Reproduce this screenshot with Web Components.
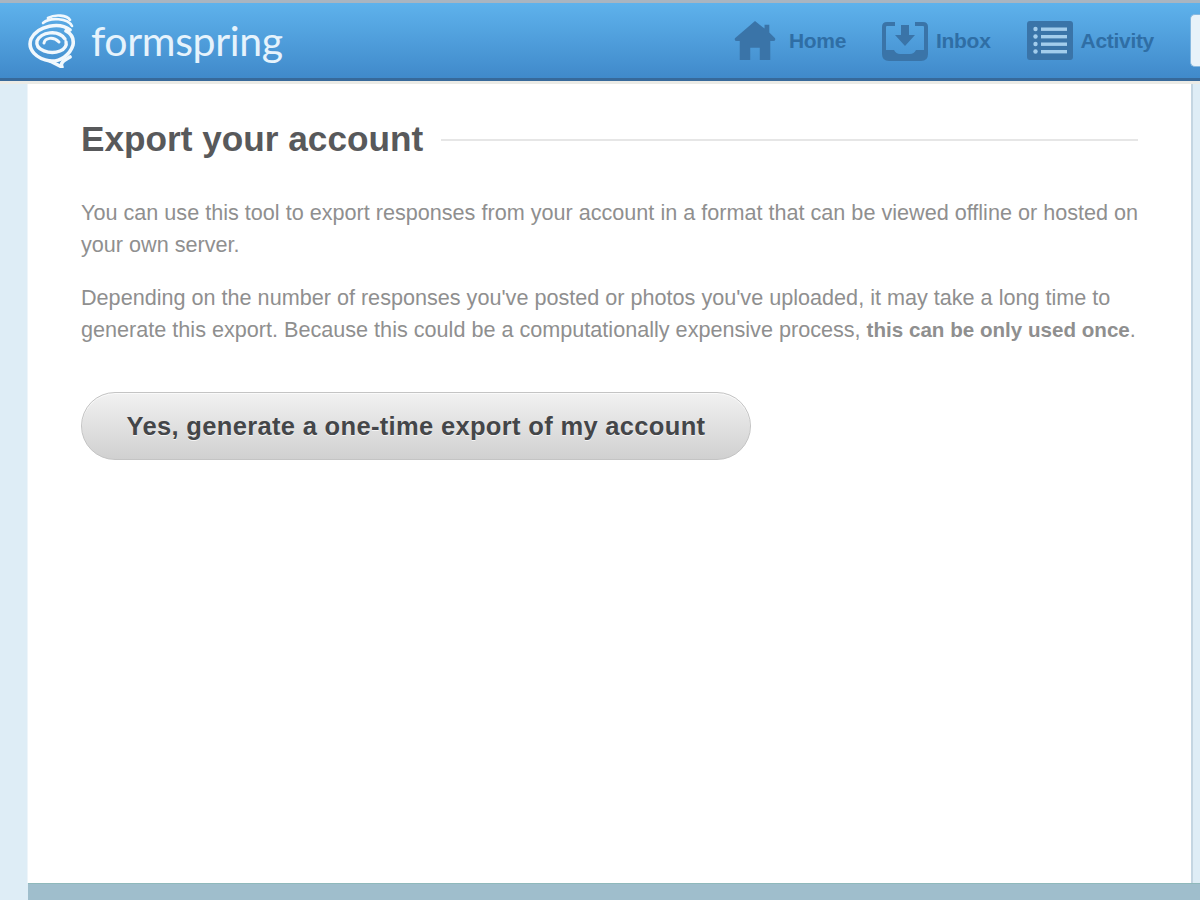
<!doctype html>
<html lang="en">
<head>
<meta charset="utf-8">
<title>Export your account</title>
<style>
  html, body { margin: 0; height: 100%; }
  body {
    width: 1200px;
    height: 900px;
    overflow: hidden;
    display: flex;
    flex-direction: column;
    background: #deedf6;
    font-family: "Liberation Sans", Arial, sans-serif;
  }
  b { font-size: 20.6px; }
</style>
</head>
<body>
<fs-header>
  <fs-nav-item label="Home" icon="home"></fs-nav-item>
  <fs-nav-item label="Inbox" icon="inbox"></fs-nav-item>
  <fs-nav-item label="Activity" icon="activity"></fs-nav-item>
</fs-header>
<fs-page>
  <fs-heading>Export your account</fs-heading>
  <p>You can use this tool to export responses from your account in a format that can be viewed offline or hosted on your own server.</p>
  <p>Depending on the number of responses you've posted or photos you've uploaded, it may take a long time to generate this export. Because this could be a computationally expensive process, <b>this can be only used once</b>.</p>
  <fs-button>Yes, generate a one-time export of my account</fs-button>
</fs-page>
<fs-footer></fs-footer>

<script>
const ICONS = {
  home: `<svg style="margin-right:5px" width="42" height="42" viewBox="0 0 44 44"><path fill="#3a74a8" d="M22 1 L32 9 V5 H37 V13 L43 19 Q44 22 41 22 H38 V42 H27 V29 H17 V42 H6 V22 H3 Q0 22 1 19 Z"/></svg>`,
  inbox: `<svg width="46" height="40" viewBox="0 0 46 40"><path fill="none" stroke="#3a74a8" stroke-width="4" stroke-linejoin="round" d="M13 3 H5 Q2 3 2 6 V33 Q2 38 7 38 H39 Q44 38 44 33 V6 Q44 3 41 3 H33"/><path fill="#3a74a8" d="M3 29 H12 Q14 33 18 33 H28 Q32 33 34 29 H43 V37 H3 Z"/><path fill="#3a74a8" d="M19 4 H27 V14 H33 L23 25 L13 14 H19 Z"/></svg>`,
  activity: `<svg width="46" height="39" viewBox="0 0 46 39"><rect width="46" height="39" rx="3" fill="#3a74a8"/><g fill="#a3cdec"><circle cx="8.5" cy="8" r="2.2"/><circle cx="8.5" cy="15.5" r="2.2"/><circle cx="8.5" cy="23" r="2.2"/><circle cx="8.5" cy="30.5" r="2.2"/><rect x="14" y="6.5" width="26" height="3.4"/><rect x="14" y="14" width="26" height="3.4"/><rect x="14" y="21.5" width="26" height="3.4"/><rect x="14" y="29" width="26" height="3.4"/></g></svg>`,
};

class FsHeader extends HTMLElement {
  constructor() {
    super();
    this.attachShadow({ mode: "open" }).innerHTML = `\
<style>
  :host {
    display: flex;
    flex: none;
    align-items: center;
    box-sizing: border-box;
    height: 84px;
    padding: 3px 0 6px 28px;
    border-top: 3px solid #a9b5c1;
    border-bottom: 3px solid #ebebe6;
    box-shadow: inset 0 -3px 0 #37699a;
    background: linear-gradient(#5eb2ec, #3f88c9);
  }
  #logo { display: flex; align-items: center; gap: 15px; }
  #word {
    font: 400 41px/1 Lato, "Open Sans", sans-serif;
    letter-spacing: -0.35px;
    color: #e6f3fc;
    margin-top: -1px;
  }
  nav { display: flex; gap: 36px; margin-left: auto; align-items: center; }
  #cut {
    box-sizing: border-box;
    flex: none;
    width: 10px;
    height: 53px;
    margin-left: 36px;
    background: #e8f2f9;
    border-radius: 5px 0 0 5px;
    border: 1px solid #86b8e0;
    border-right: 0;
  }
</style>
<div id="logo">
  <svg width="48" height="54" viewBox="0 0 48 54" fill="none" stroke="#f1f8fd" stroke-linecap="round" stroke-linejoin="round">
    <path stroke-width="2.6" d="M20 4 C27 0 39 1 42 6"/>
    <path stroke-width="2.6" d="M15 9 C22 3 40 4 44 12"/>
    <path stroke-width="3.6" d="M42 16 C32 8 10 11 3 25 C-1 36 9 45 22 47 C32 48 42 41 45 31 C46 25 44 20 38 17"/>
    <path stroke-width="3.4" d="M37 25 C30 15 13 18 9 27 C7 36 22 41 32 37 C37 35 39 31 38 28"/>
    <path stroke-width="3" d="M31 28 C25 22 17 24 16 29"/>
    <path stroke-width="3.6" d="M22 47 L34 53 C32 49 35 47 42 43"/>
  </svg>
  <span id="word">formspring</span>
</div>
<nav><slot></slot></nav>
<div id="cut"></div>
`;
  }
}

class FsNavItem extends HTMLElement {
  constructor() {
    super();
    this.attachShadow({ mode: "open" }).innerHTML = `\
<style>
  :host { display: inline-flex; align-items: center; gap: 8px; }
  #icon { display: flex; }
  #label {
    font: bold 21px/1 "Liberation Sans", Arial, sans-serif;
    letter-spacing: -0.3px;
    color: #2f6ea5;
  }
</style>
<span id="icon"></span><span id="label"></span>
`;
  }

  connectedCallback() {
    this.shadowRoot.getElementById("icon").innerHTML =
      ICONS[this.getAttribute("icon")] ?? "";
    this.shadowRoot.getElementById("label").textContent =
      this.getAttribute("label");
  }
}

class FsPage extends HTMLElement {
  constructor() {
    super();
    this.attachShadow({ mode: "open" }).innerHTML = `\
<style>
  :host {
    display: block;
    flex: 1;
    box-sizing: border-box;
    margin: 0 0 0 28px;
    width: 1162px;
    padding: 32px 50px 0 53px;
    background: #fff;
    box-shadow: -1px 0 0 #eef5fa, 1px 0 0 #fff, 3px 0 0 #c4d6e2;
  }
  ::slotted(p) {
    margin: 0 0 21px;
    font-size: 21.62px;
    line-height: 32px;
    color: #8f8f8f;
  }
  ::slotted(fs-heading) { margin-bottom: 35px; }
  ::slotted(fs-button) { margin-top: 46px; }
</style>
<slot></slot>
`;
  }
}

class FsHeading extends HTMLElement {
  constructor() {
    super();
    this.attachShadow({ mode: "open" }).innerHTML = `\
<style>
  :host { display: flex; align-items: center; gap: 18px; margin-right: 2px; }
  h1 {
    margin: 0;
    font: bold 35.2px/46px "Liberation Sans", Arial, sans-serif;
    color: #58595b;
    white-space: nowrap;
  }
  i { flex: 1; height: 2px; margin-top: 2px; background: #e6e6e6; }
</style>
<h1><slot></slot></h1><i></i>
`;
  }
}

class FsButton extends HTMLElement {
  constructor() {
    super();
    this.attachShadow({ mode: "open" }).innerHTML = `\
<style>
  :host { display: block; }
  button {
    display: block;
    box-sizing: border-box;
    width: 670px;
    height: 68px;
    padding: 1px 0 0;
    border: 1px solid #c4c4c4;
    border-radius: 34px;
    background: linear-gradient(#f1f1f1, #d0d0d0);
    box-shadow: inset 0 1px 0 #fafafa;
    font: bold 25.5px/1 "Liberation Sans", Arial, sans-serif;
    letter-spacing: 0.33px;
    color: #444649;
    text-shadow: 0 1px 0 #f4f4f4;
  }
</style>
<button type="button"><slot></slot></button>
`;
  }
}

class FsFooter extends HTMLElement {
  constructor() {
    super();
    this.attachShadow({ mode: "open" }).innerHTML = `\
<style>
  :host {
    display: block;
    flex: none;
    box-sizing: border-box;
    height: 17px;
    margin-left: 28px;
    background: #9fbecc;
    border-top: 1px solid #8fb9bb;
  }
</style>
`;
  }
}

customElements.define("fs-header", FsHeader);
customElements.define("fs-nav-item", FsNavItem);
customElements.define("fs-page", FsPage);
customElements.define("fs-heading", FsHeading);
customElements.define("fs-button", FsButton);
customElements.define("fs-footer", FsFooter);
</script>
</body>
</html>
